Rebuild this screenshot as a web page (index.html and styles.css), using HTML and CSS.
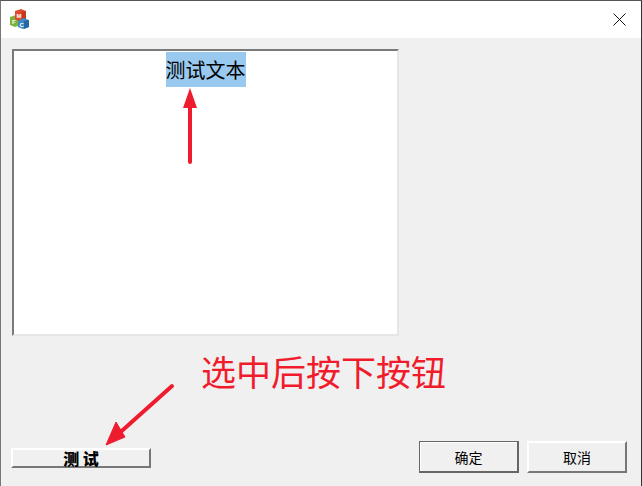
FILE: index.html

```html
<!DOCTYPE html>
<html lang="zh-CN">
<head>
    <meta charset="UTF-8">
    <meta name="viewport" content="width=device-width, initial-scale=1.0">
    <title>测试</title>
    <link rel="stylesheet" href="styles.css">
</head>
<body>
    <div class="window">
        <div class="titlebar">
            <svg class="app-icon" width="20" height="20" viewBox="0 0 20 20">
                <path d="M0 8 L6 6 L10 9 L10 16 L5 18 L0 16 Z" fill="#7fb03a"/>
                <path d="M5 2 L11 0 L16 2 L16 10 L10 13 L5 10 Z" fill="#e0492c"/>
                <path d="M11 3 L16 2 L16 10 L11 13 Z" fill="#c23a20"/>
                <path d="M8 12 L13 9 L19 11 L19 18 L13 20 L8 18 Z" fill="#3f8ac4"/>
                <path d="M14 12 L19 11 L19 18 L14 20 Z" fill="#2368a3"/>
                <text class="icon-letter" x="6.5" y="8.5">M</text>
                <text class="icon-letter" x="2" y="15">F</text>
                <text class="icon-letter" x="9.5" y="17.5">C</text>
            </svg>
            <svg class="close-icon" width="13" height="13" viewBox="0 0 13 13">
                <path d="M0.5 0.5 L12.5 12.5 M12.5 0.5 L0.5 12.5" stroke="#111" stroke-width="1" fill="none"/>
            </svg>
        </div>

        <div class="client">
            <div class="edit-box">
                <span class="selected-text">测试文本</span>
            </div>

            <div class="footer">
                <button class="btn btn-test">测 试</button>
                <div class="footer-right">
                    <button class="btn btn-default">确定</button>
                    <button class="btn btn-normal">取消</button>
                </div>
            </div>
        </div>
    </div>

    <!-- annotations drawn over the dialog -->
    <svg class="arrow-up" width="20" height="80" viewBox="0 0 20 80">
        <path d="M10 0 L17 20 L3 20 Z" fill="#ee1c2e"/>
        <path d="M10 16 L10 74" stroke="#ee1c2e" stroke-width="4" stroke-linecap="round" fill="none"/>
    </svg>
    <svg class="arrow-diag" width="80" height="70" viewBox="0 0 80 70">
        <path d="M67 6 L10 57" stroke="#ee1c2e" stroke-width="4" stroke-linecap="round" fill="none"/>
        <path d="M1 65 L11 42 L20 57 Z" fill="#ee1c2e" stroke="#ee1c2e" stroke-width="1"/>
    </svg>
    <div class="note">选中后按下按钮</div>
</body>
</html>
```

FILE: styles.css

```css
html, body {
    margin: 0;
    padding: 0;
}

body {
    width: 642px;
    height: 486px;
    overflow: hidden;
    position: relative;
    font-family: "Noto Sans CJK SC", "Liberation Sans", sans-serif;
    background-color: #f0f0f0;
}

.window {
    box-sizing: border-box;
    width: 642px;
    height: 486px;
    display: flex;
    flex-direction: column;
    border-top: 1px solid #555;
    border-left: 1px solid #777;
    border-right: 1px solid #333;
}

.titlebar {
    height: 37px;
    background-color: #ffffff;
    display: flex;
    align-items: flex-start;
    justify-content: space-between;
    padding: 8px 15px 0 9px;
    box-sizing: border-box;
}

.app-icon {
    display: block;
}

.icon-letter {
    font-family: "Liberation Sans", sans-serif;
    font-size: 6px;
    font-weight: bold;
    fill: #ffffff;
}

.close-icon {
    display: block;
    margin-top: 4px;
}

.client {
    flex: 1;
    display: flex;
    flex-direction: column;
    justify-content: space-between;
    padding: 11px 14px 13px 10px;
    background-color: #f0f0f0;
}

.edit-box {
    box-sizing: border-box;
    width: 387px;
    height: 287px;
    margin-left: 1px;
    background-color: #ffffff;
    border: 2px solid;
    border-color: #7a7a7a #e6e6e6 #e6e6e6 #7a7a7a;
    padding-top: 1px;
    text-align: center;
}

.selected-text {
    display: inline-block;
    height: 35px;
    line-height: 35px;
    font-size: 20px;
    background-color: #99c9ef;
    color: #000000;
}

.footer {
    display: flex;
    align-items: flex-end;
    justify-content: space-between;
}

.footer-right {
    display: flex;
    gap: 8px;
}

.btn {
    box-sizing: border-box;
    padding: 0;
    background-color: #f0f0f0;
    border: 2px solid;
    border-color: #ffffff #777777 #777777 #ffffff;
    color: #000000;
    font-family: "Noto Sans CJK SC", "Liberation Sans", sans-serif;
    font-size: 14px;
}

.btn-test {
    width: 140px;
    height: 20px;
    line-height: 16px;
    font-size: 16px;
    font-weight: 900;
    margin-bottom: 5px;
}

.btn-default {
    width: 100px;
    height: 32px;
    border-color: #666666;
    border-width: 1px 2px 2px 1px;
    box-shadow: inset 1px 1px 0 #ffffff;
}

.btn-normal {
    width: 100px;
    height: 32px;
}

.arrow-up {
    position: absolute;
    left: 180px;
    top: 88px;
}

.arrow-diag {
    position: absolute;
    left: 105px;
    top: 380px;
}

.note {
    position: absolute;
    left: 201px;
    top: 346px;
    font-size: 35px;
    line-height: 50px;
    color: #f01c2c;
    white-space: nowrap;
}
```
